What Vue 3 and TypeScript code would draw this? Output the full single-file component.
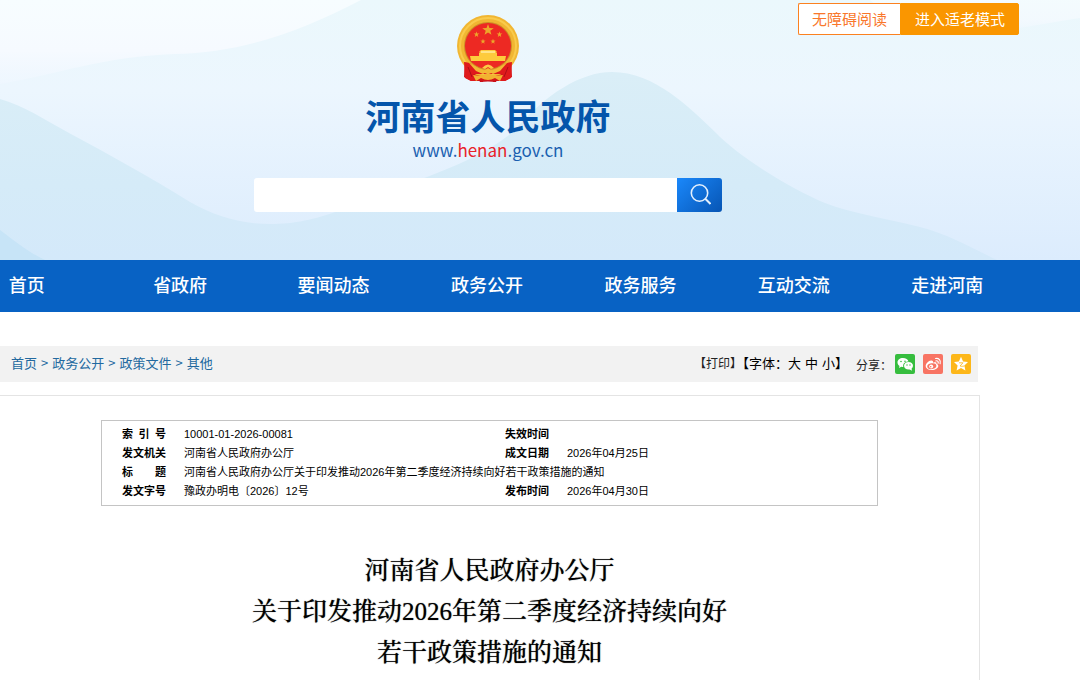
<script setup lang="ts">
import { ref } from 'vue'

const keyword = ref('')
const navItems: string[] = ['首页', '省政府', '要闻动态', '政务公开', '政务服务', '互动交流', '走进河南']
const crumbs: string[] = ['首页', '政务公开', '政策文件', '其他']
const sizes: string[] = ['大', '中', '小']
const titleLines: string[] = ['河南省人民政府办公厅', '关于印发推动2026年第二季度经济持续向好', '若干政策措施的通知']
const star = '0,-5 1.2,-1.6 4.8,-1.5 1.9,0.6 2.9,4 0,2 -2.9,4 -1.9,0.6 -4.8,-1.5 -1.2,-1.6'
</script>

<template>
  <div class="page">
    <header class="banner">
      <svg class="waves" viewBox="0 0 1080 260" preserveAspectRatio="none" aria-hidden="true">
        <defs>
          <linearGradient id="sky" x1="0" y1="0" x2="0" y2="1">
            <stop offset="0" stop-color="#ebf8fc" />
            <stop offset="0.35" stop-color="#ecf6fe" />
            <stop offset="1" stop-color="#dcecfd" />
          </linearGradient>
          <linearGradient id="glow" x1="0" y1="0" x2="0" y2="1">
            <stop offset="0" stop-color="#f7fdff" />
            <stop offset="0.6" stop-color="#f6faff" />
            <stop offset="1" stop-color="#f0f7ff" stop-opacity="0.6" />
          </linearGradient>
          <linearGradient id="hill" x1="0" y1="0" x2="0" y2="1">
            <stop offset="0" stop-color="#daeef7" />
            <stop offset="0.6" stop-color="#d5ebf8" />
            <stop offset="1" stop-color="#d4e9fa" />
          </linearGradient>
        </defs>
        <rect width="1080" height="260" fill="url(#sky)" />
        <path d="M0 0H361C300 32 240 53 175 54C100 57 60 74 0 84Z" fill="url(#glow)" />
        <path d="M1080 18C1040 24 1000 34 960 32C920 28 890 18 870 0H1080Z" fill="url(#glow)" opacity="0.7" />
        <path d="M0 99C25 106 45 120 69 133C110 155 150 177 190 202C215 216 240 224 270 224C320 224 350 205 427 177C455 166 490 152 515 130C545 95 580 72 612 72C655 72 690 108 715 132C740 158 790 188 825 203C850 213 880 217 920 227C950 235 970 247 997 260H0Z" fill="url(#hill)" />
        <path d="M0 230C16 242 28 252 45 260H0Z" fill="#c7e4f7" />
      </svg>

      <div class="brand">
        <svg class="emblem" viewBox="0 0 62 67" role="img" aria-label="国徽">
          <path d="M8 47L7 62L14 66H48L55 62L54 47Z" fill="#d3151a" />
          <circle cx="31" cy="31" r="31" fill="#f1b632" />
          <circle cx="31" cy="31" r="28" fill="none" stroke="#f9cb4c" stroke-width="2" />
          <circle cx="31" cy="31" r="24" fill="#cd8d26" />
          <circle cx="31" cy="31" r="23" fill="#ed2923" />
          <g fill="#eda72a">
            <polygon :points="star" transform="translate(31 15) scale(1.2)" />
            <polygon :points="star" transform="translate(19.500 19.500) scale(.6)" />
            <polygon :points="star" transform="translate(42.500 19.500) scale(.6)" />
            <polygon :points="star" transform="translate(26 26.500) scale(.55)" />
            <polygon :points="star" transform="translate(36 26.500) scale(.55)" />
          </g>
          <path d="M24 35H38L40 37L39 38H40V41H49L48 46H14L13 41H22V38H23L22 37Z" fill="#fdcb3c" />
          <path d="M24 36H38V38H24Z" fill="#ffe487" />
          <path d="M7 47C13 47 19 52 24 57L31 59L38 57C43 52 49 47 55 47L54 63L48 66L43 66L46 59H16L19 66L14 66L8 63Z" fill="#df1a1c" />
          <path d="M12 48C17 50 22 54 27 56L31 53L35 56C40 54 45 50 50 48L43 56L36 59L31 56L26 59L19 56Z" fill="#f3b934" />
          <path d="M25 53Q31 46 37 53L34 54L31 52L28 54Z" fill="#fbc945" />
          <path d="M16 60L25 61Q31 56 37 61L46 60L43 66L38 63Q31 67 24 63L19 66Z" fill="#f2b331" />
          <path d="M22 65Q31 68 40 65L39 67H23Z" fill="#c81119" />
          <path d="M11 52L15 62M51 52L47 62" stroke="#ad1017" />
        </svg>
        <h1 class="site-name">河南省人民政府</h1>
        <p class="site-url">www.<span>henan</span>.gov.cn</p>
        <form class="search" role="search" @submit.prevent>
          <input v-model="keyword" type="text" aria-label="搜索" />
          <button type="submit" aria-label="搜索">
            <svg viewBox="0 0 22 22" fill="none" stroke="#e4f0fd" stroke-width="1.600" aria-hidden="true">
              <circle cx="10.500" cy="9" r="8.200" />
              <path d="M16 14.500L21.500 20" stroke-width="2" />
            </svg>
          </button>
        </form>
      </div>

      <div class="modes">
        <button type="button" class="plain">无障碍阅读</button>
        <button type="button" class="solid">进入适老模式</button>
      </div>
    </header>

    <nav class="main-nav">
      <ul>
        <li v-for="item in navItems" :key="item"><a href="#">{{ item }}</a></li>
      </ul>
    </nav>

    <main class="content">
      <div class="toolbar">
        <div class="crumbs">
          <template v-for="(crumb, i) in crumbs" :key="crumb">
            <span v-if="i > 0">&gt;</span><a href="#">{{ crumb }}</a>
          </template>
        </div>
        <div class="tools">
          <button type="button" class="print">【打印】</button>
          <div class="font-size">
            <span>【字体：</span>
            <div class="sizes">
              <button v-for="size in sizes" :key="size" type="button">{{ size }}</button>
            </div>
            <span>】</span>
          </div>
          <span class="share-label">分享：</span>
          <div class="share">
            <a href="#" class="wechat" aria-label="微信">
              <svg viewBox="0 0 20 20" fill="#fff">
                <path d="M8 4C4.700 4 2.500 6 2.500 8.500C2.500 10 3.300 11.200 4.500 12L4 14L6.200 12.800Q7.500 13 8.300 12.900C7.600 9.600 10 7.300 13.500 7.400C13 5.300 10.800 4 8 4Z" />
                <ellipse cx="13.500" cy="11.800" rx="4.500" ry="3.800" />
                <path d="M14 15L17 16.700L16.400 14Z" />
                <g fill="#36bd3e"><circle cx="6" cy="7.500" r=".8" /><circle cx="10" cy="7.200" r=".8" /><circle cx="12" cy="11" r=".7" /><circle cx="15" cy="11" r=".7" /></g>
              </svg>
            </a>
            <a href="#" class="weibo" aria-label="微博">
              <svg viewBox="0 0 20 20" fill="none" stroke="#fff">
                <path d="M8.500 6.500C6 6 2.700 9.500 2.700 12C2.700 14.500 5.500 16 8.700 16C12.500 16 15.300 13.900 15.300 12C15.300 10.800 14.500 10.200 13.500 10C14 8.300 12.500 7.700 10 8.700C10.300 7.400 10 6.700 8.500 6.500Z" fill="#fff" stroke="none" />
                <ellipse cx="8.800" cy="12.200" rx="4.600" ry="2.900" fill="#f87463" stroke="none" transform="rotate(-8 8.800 12.200)" />
                <circle cx="8.200" cy="12.400" r="2" fill="#fff" stroke="none" />
                <circle cx="7.700" cy="12.800" r=".8" fill="#f87463" stroke="none" />
                <path d="M12.500 4.500C15.800 3.800 18.200 6.500 17.100 9.700M13 6.800C14.700 6.500 15.700 7.700 15.100 9.200" stroke-width="1.200" stroke-linecap="round" />
              </svg>
            </a>
            <a href="#" class="qzone" aria-label="QQ空间">
              <svg viewBox="0 0 20 20" fill="#fff">
                <path d="M10 2.800L12.100 7.400L17 8L13.400 11.500L14.400 16.600L10 14L5.600 16.600L6.600 11.500L3 8L7.900 7.400Z" />
                <path d="M8 8.800H12L9 12Q11 12.600 13.500 12" fill="none" stroke="#fdb719" stroke-width=".8" />
              </svg>
            </a>
          </div>
        </div>
      </div>

      <article class="document">
        <table class="meta">
          <colgroup><col class="c-label" /><col class="c-wide" /><col class="c-label" /><col /></colgroup>
          <tbody>
            <tr>
              <th scope="row"><span>索 引 号</span></th><td>10001-01-2026-00081</td>
              <th scope="row"><span>失效时间</span></th><td></td>
            </tr>
            <tr>
              <th scope="row"><span>发文机关</span></th><td>河南省人民政府办公厅</td>
              <th scope="row"><span>成文日期</span></th><td>2026年04月25日</td>
            </tr>
            <tr>
              <th scope="row"><span>标 题</span></th>
              <td colspan="3">河南省人民政府办公厅关于印发推动2026年第二季度经济持续向好若干政策措施的通知</td>
            </tr>
            <tr>
              <th scope="row"><span>发文字号</span></th><td>豫政办明电〔2026〕12号</td>
              <th scope="row"><span>发布时间</span></th><td>2026年04月30日</td>
            </tr>
          </tbody>
        </table>
        <h2 class="doc-title"><span v-for="line in titleLines" :key="line">{{ line }}</span></h2>
      </article>
    </main>
  </div>
</template>

<style>
body {
  margin: 0;
  background: #fff;
  overflow: hidden;
}
</style>

<style scoped>
.page {
  font-family: "Noto Sans CJK SC", sans-serif;
  color: #000;
}
a {
  color: inherit;
  text-decoration: none;
}
button {
  font-family: inherit;
  cursor: pointer;
}
.banner {
  position: relative;
  display: grid;
  height: 260px;
}
.waves {
  position: absolute;
  inset: 0;
  width: 100%;
  height: 100%;
}
.brand,
.modes {
  position: relative;
  grid-area: 1 / 1;
}
.brand {
  display: flex;
  flex-direction: column;
  align-items: center;
  margin-right: 104px;
  padding-top: 15px;
}
.emblem {
  width: 62px;
  height: 67px;
}
.site-name {
  margin: 9px 0 0;
  font-size: 35px;
  line-height: 48px;
  font-weight: 700;
  color: #0455ab;
}
.site-url {
  margin: 0;
  font-size: 17px;
  line-height: 22px;
  color: #1a5fb0;
}
.site-url span {
  color: #e82229;
}
.search {
  display: flex;
  width: 48%;
  height: 34px;
  margin-top: 17px;
}
.search input {
  flex: 1;
  min-width: 0;
  padding: 0 12px;
  border: 0;
  border-radius: 3px 0 0 3px;
  background: #fff;
  font-size: 15px;
  outline: none;
}
.search button {
  display: grid;
  place-items: center;
  width: 45px;
  padding: 0;
  border: 0;
  border-radius: 0 3px 3px 0;
  background: linear-gradient(135deg, #1a88fb, #0755b4);
}
.search svg {
  width: 22px;
  height: 22px;
}
.modes {
  display: flex;
  justify-self: end;
  align-self: start;
  margin: 3px 61px 0 0;
}
.modes button {
  box-sizing: border-box;
  height: 32px;
  padding: 0 13px;
  border: 1px solid #fb8120;
  font-size: 15px;
  line-height: 28px;
}
.modes .plain {
  border-right: 0;
  border-radius: 2px 0 0 2px;
  background: #fff;
  color: #f9772b;
}
.modes .solid {
  padding-left: 14px;
  border-color: #fa9600;
  border-radius: 0 2px 2px 0;
  background: #fa9600;
  color: #fff;
}
.main-nav {
  background: #0862c4;
}
.main-nav ul {
  display: grid;
  grid-template-columns: repeat(7, 1fr);
  margin: 0 56px 0 -50px;
  padding: 0;
  list-style: none;
}
.main-nav a {
  display: block;
  padding-bottom: 4px;
  font-size: 18px;
  line-height: 48px;
  font-weight: 500;
  text-align: center;
  color: #fff;
}
.content {
  margin: 34px 100px 0 0;
}
.toolbar {
  display: flex;
  justify-content: space-between;
  align-items: center;
  height: 36px;
  margin-right: 2px;
  padding: 0 7px 0 11px;
  background: #f2f2f2;
}
.crumbs {
  padding-bottom: 2px;
  font-size: 13px;
  line-height: 20px;
  white-space: nowrap;
  color: #22699f;
}
.crumbs span {
  margin: 0 4px;
}
.tools,
.font-size,
.sizes,
.share {
  display: flex;
  align-items: center;
}
.tools {
  color: #222;
}
.tools button {
  padding: 0;
  border: 0;
  background: none;
  color: inherit;
}
.tools .print {
  padding-bottom: 2px;
  font-size: 12px;
  line-height: 20px;
  font-feature-settings: "halt";
}
.font-size {
  padding-bottom: 2px;
  font-size: 13px;
  line-height: 20px;
  color: #000;
}
.sizes {
  gap: 4px;
}
.sizes button {
  font-size: 13px;
  line-height: 20px;
}
.share-label {
  margin-left: 8px;
  padding-top: 2px;
  font-size: 12px;
  line-height: 20px;
}
.share {
  gap: 8px;
  margin-left: 3px;
}
.share a {
  width: 20px;
  height: 20px;
  border-radius: 2px;
}
.share svg {
  display: block;
}
.wechat {
  background: #36bd3e;
}
.weibo {
  background: #f87463;
}
.qzone {
  background: #fdb719;
}
.document {
  min-height: 260px;
  margin-top: 13px;
  padding: 24px 101px 0;
  border: 1px solid #e4e4e4;
  border-left: 0;
}
.meta {
  width: 100%;
  padding: 4px 0 4px 20px;
  border: 1px solid #c4c4c4;
  border-spacing: 0;
  table-layout: fixed;
  font-family: "Liberation Sans", "Noto Sans CJK SC", sans-serif;
  font-size: 11px;
  line-height: 19px;
  text-align: left;
}
.meta th,
.meta td {
  padding: 0;
  white-space: nowrap;
}
.c-label {
  width: 62px;
}
.c-wide {
  width: 321px;
}
.meta th span {
  display: block;
  width: 44px;
  text-align-last: justify;
}
.doc-title {
  margin: 44px 0 0;
  font-family: "Liberation Serif", "Noto Serif CJK SC", "Source Han Serif SC", "SimSun", "Noto Sans CJK SC", serif;
  font-size: 25px;
  line-height: 41px;
  font-weight: 500;
  text-align: center;
  text-shadow: 0 0 1px rgba(0, 0, 0, 0.6);
}
.doc-title span {
  display: block;
}
</style>
